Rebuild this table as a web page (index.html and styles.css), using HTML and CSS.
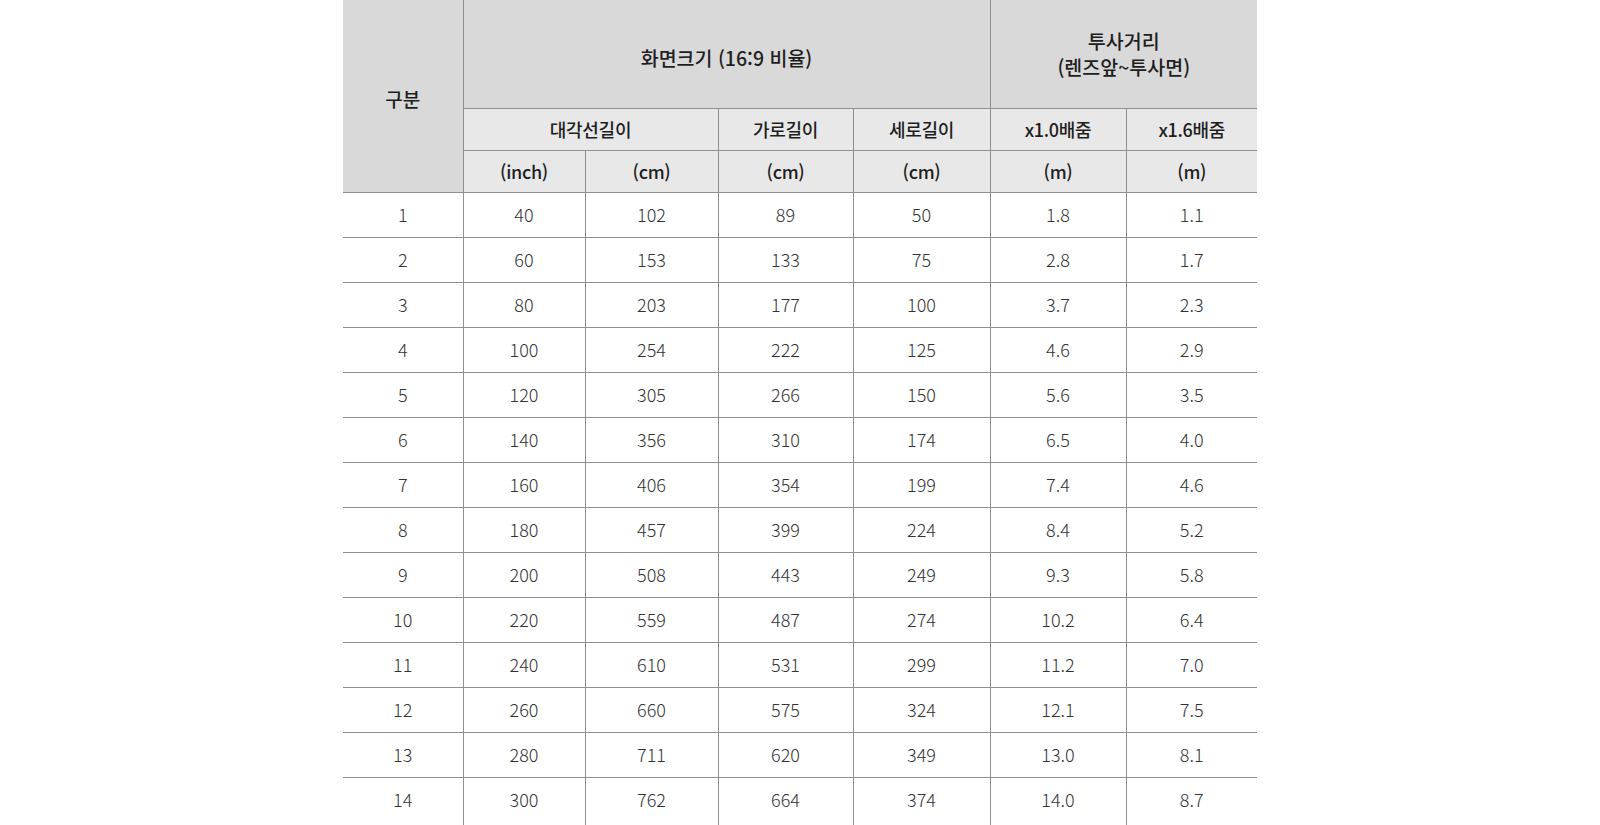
FILE: index.html
```html
<!DOCTYPE html>
<html lang="ko">
<head>
<meta charset="utf-8">
<link rel="stylesheet" href="styles.css">
</head>
<body>
<table class="spec">
  <colgroup>
    <col class="c1"><col class="c2"><col class="c3"><col class="c4"><col class="c5"><col class="c6"><col class="c7">
  </colgroup>
  <thead>
    <tr class="h1">
      <th rowspan="3" class="gubun">구분</th>
      <th colspan="4" class="title">화면크기 (16:9 비율)</th>
      <th colspan="2" class="title two">투사거리<br>(렌즈앞~투사면)</th>
    </tr>
    <tr class="h2">
      <th colspan="2">대각선길이</th>
      <th>가로길이</th>
      <th>세로길이</th>
      <th>x1.0배줌</th>
      <th>x1.6배줌</th>
    </tr>
    <tr class="h3">
      <th>(inch)</th>
      <th>(cm)</th>
      <th>(cm)</th>
      <th>(cm)</th>
      <th>(m)</th>
      <th>(m)</th>
    </tr>
  </thead>
  <tbody>
    <tr><td>1</td><td>40</td><td>102</td><td>89</td><td>50</td><td>1.8</td><td>1.1</td></tr>
    <tr><td>2</td><td>60</td><td>153</td><td>133</td><td>75</td><td>2.8</td><td>1.7</td></tr>
    <tr><td>3</td><td>80</td><td>203</td><td>177</td><td>100</td><td>3.7</td><td>2.3</td></tr>
    <tr><td>4</td><td>100</td><td>254</td><td>222</td><td>125</td><td>4.6</td><td>2.9</td></tr>
    <tr><td>5</td><td>120</td><td>305</td><td>266</td><td>150</td><td>5.6</td><td>3.5</td></tr>
    <tr><td>6</td><td>140</td><td>356</td><td>310</td><td>174</td><td>6.5</td><td>4.0</td></tr>
    <tr><td>7</td><td>160</td><td>406</td><td>354</td><td>199</td><td>7.4</td><td>4.6</td></tr>
    <tr><td>8</td><td>180</td><td>457</td><td>399</td><td>224</td><td>8.4</td><td>5.2</td></tr>
    <tr><td>9</td><td>200</td><td>508</td><td>443</td><td>249</td><td>9.3</td><td>5.8</td></tr>
    <tr><td>10</td><td>220</td><td>559</td><td>487</td><td>274</td><td>10.2</td><td>6.4</td></tr>
    <tr><td>11</td><td>240</td><td>610</td><td>531</td><td>299</td><td>11.2</td><td>7.0</td></tr>
    <tr><td>12</td><td>260</td><td>660</td><td>575</td><td>324</td><td>12.1</td><td>7.5</td></tr>
    <tr><td>13</td><td>280</td><td>711</td><td>620</td><td>349</td><td>13.0</td><td>8.1</td></tr>
    <tr class="last"><td>14</td><td>300</td><td>762</td><td>664</td><td>374</td><td>14.0</td><td>8.7</td></tr>
  </tbody>
</table>
</body>
</html>
```
FILE: styles.css
```css
html, body {
  margin: 0;
  padding: 0;
  background: #ffffff;
}
body {
  font-family: "Noto Sans CJK KR", "Noto Sans", sans-serif;
  overflow: hidden;
}
.spec {
  margin: 0 auto;
  width: 914px;
  border-collapse: collapse;
  table-layout: fixed;
}
.c1 { width: 120px; }
.c2 { width: 122px; }
.c3 { width: 133px; }
.c4 { width: 135px; }
.c5 { width: 137px; }
.c6 { width: 136px; }
.c7 { width: 131px; }

.spec th,
.spec td {
  border: 1px solid #8f8f8f;
  text-align: center;
  vertical-align: middle;
  padding: 0;
  font-size: 18px;
}
.spec tr > :first-child { border-left: none; }
.spec tr > :last-child { border-right: none; }
.spec thead tr:first-child > * { border-top: none; }

.spec th {
  color: #1e1e1e;
  font-weight: 500;
}
.h1 th {
  background: #d9d9d9;
  height: 101px;
  padding-top: 7px;
  font-size: 19.5px;
}
.h1 .gubun {
  font-size: 19px;
  padding-top: 5px;
}
.h1 .two {
  line-height: 26px;
  padding-top: 0;
  padding-bottom: 1px;
  height: 107px;
}
.h2 th, .h3 th {
  background: #e8e8e8;
  height: 39px;
  padding-bottom: 2px;
  letter-spacing: -0.3px;
}
.spec td {
  height: 41px;
  padding-bottom: 3px;
  color: #333333;
  font-weight: 300;
}
.spec tr.last > td {
  border-bottom: none;
  padding-bottom: 7px;
}
```
